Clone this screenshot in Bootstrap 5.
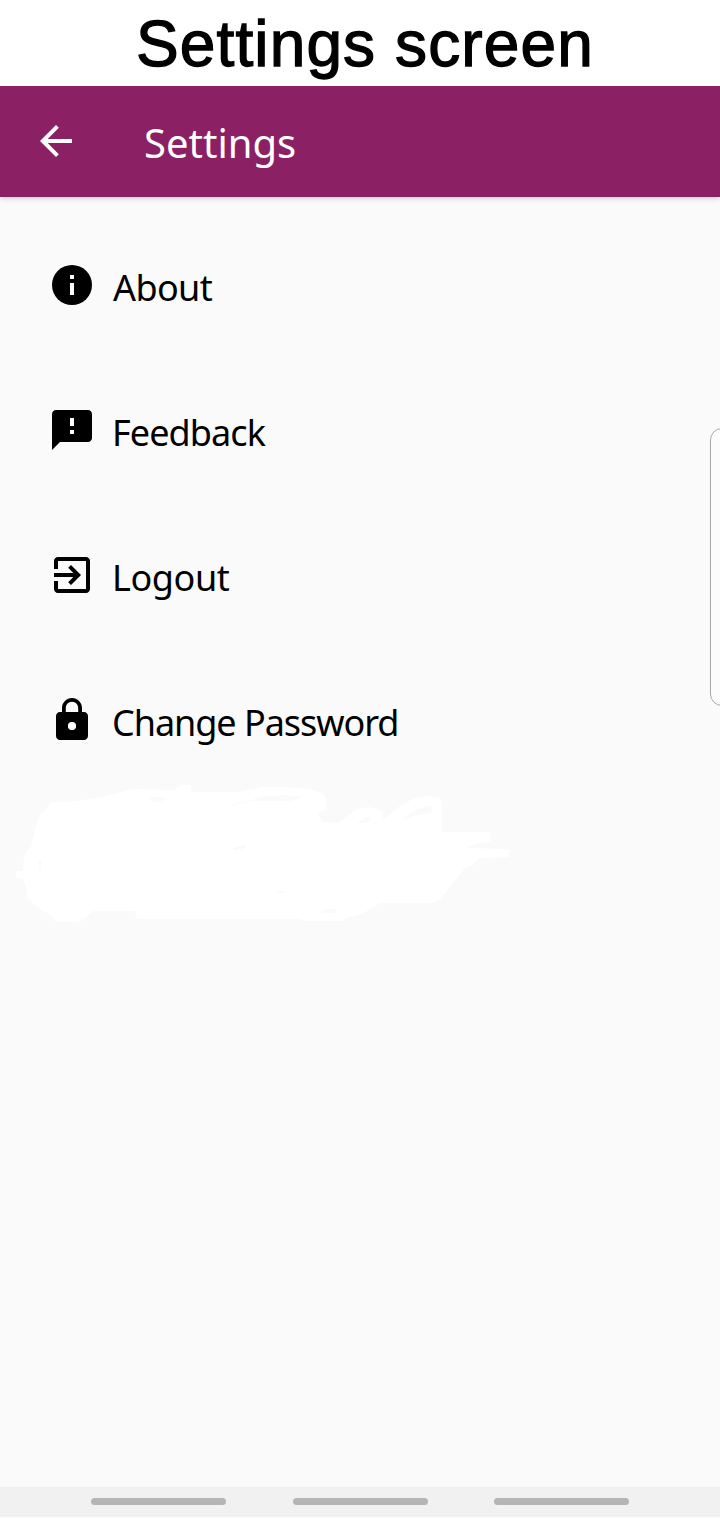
<!DOCTYPE html>
<html lang="en">
<head>
<meta charset="utf-8">
<meta name="viewport" content="width=device-width, initial-scale=1">
<title>Settings screen</title>
<link href="https://cdn.jsdelivr.net/npm/bootstrap@5.3.0/dist/css/bootstrap.min.css" rel="stylesheet">
<style>
body{font-family:"Noto Sans",sans-serif;color:#000;background:#fff}
.caption{height:86px;font:400 64px/86px "Liberation Sans",sans-serif;letter-spacing:1.12px;-webkit-text-stroke:1.3px #000;padding:1px 0 0 136px;white-space:nowrap}
.phone{height:1431px;background:#fafafa}
.appbar{height:111px;background:#8b2164;box-shadow:0 1px 6px rgba(0,0,0,.2);padding:0 0 2px 32px;z-index:1}
.appbar h1{font-size:40px;line-height:54px;font-weight:400;margin:4px 0 0 64px}
.entries{padding:64px 48px 0;gap:97px}
.entry{height:48px;font-size:36px;line-height:48px;color:#000;gap:17px;white-space:nowrap}
.entry svg{flex:none}
.entry span{padding-top:3px;line-height:48px}
.t1{letter-spacing:-.6px}
.t2{letter-spacing:-.9px;margin-left:-1px}
.t3{letter-spacing:-.4px;margin-left:-1px}
.t4{letter-spacing:-1.05px;margin-left:-1px}
.scribble{margin-top:26px;display:block}
.edge{position:absolute;left:710px;top:428px;width:24px;height:278px;border:1px solid #a8a8a8;border-radius:13px;background:#fcfcfc}
.navstrip{height:30px;background:#f1f1f1;padding:0 91px 1px}
.navstrip i{width:135px;height:7px;border-radius:4px;background:#b5b5b5}
</style>
</head>
<body class="overflow-hidden position-relative">
<div class="caption">Settings screen</div>
<main class="phone d-flex flex-column overflow-hidden">
  <header class="appbar d-flex align-items-center text-white position-relative flex-shrink-0">
    <svg width="48" height="48" viewBox="0 0 24 24" fill="#fff"><path d="M20 11H7.83l5.59-5.59L12 4l-8 8 8 8 1.41-1.41L7.83 13H20z"/></svg>
    <h1>Settings</h1>
  </header>
  <nav class="entries d-flex flex-column">
    <a class="entry d-flex text-decoration-none">
      <svg width="48" height="48" viewBox="0 0 24 24"><circle cx="12" cy="12" r="10"/><path fill="#fff" d="M11 7h2v2h-2zM11 11h2v6h-2z"/></svg><span class="t1">About</span></a>
    <a class="entry d-flex text-decoration-none">
      <svg width="48" height="48" viewBox="0 0 24 24"><path d="M20 2H4c-1.100 0-1.990.9-1.990 2L2 22l4-4h14c1.100 0 2-.9 2-2V4c0-1.100-.9-2-2-2z"/><path fill="#fff" d="M11 6h2v4h-2zM11 12h2v2h-2z"/></svg><span class="t2">Feedback</span></a>
    <a class="entry d-flex text-decoration-none">
      <svg width="48" height="48" viewBox="0 0 24 24"><path d="M10.090 15.590L11.500 17l5-5-5-5-1.410 1.410L12.670 11H3v2h9.670l-2.580 2.590zM19 3H5c-1.110 0-2 .9-2 2v4h2V5h14v14H5v-4H3v4c0 1.100.89 2 2 2h14c1.100 0 2-.9 2-2V5c0-1.100-.9-2-2-2z"/></svg><span class="t3">Logout</span></a>
    <a class="entry d-flex text-decoration-none">
      <svg width="48" height="48" viewBox="0 0 24 24"><path d="M18 8h-1V6c0-2.760-2.240-5-5-5S7 3.240 7 6v2H6c-1.100 0-2 .9-2 2v10c0 1.100.9 2 2 2h12c1.100 0 2-.9 2-2V10c0-1.100-.9-2-2-2zm-6 9c-1.100 0-2-.9-2-2s.9-2 2-2 2 .9 2 2-.9 2-2 2zm3.100-9H8.900V6c0-1.710 1.390-3.100 3.100-3.100s3.100 1.390 3.100 3.100v2z"/><circle cx="12" cy="15" r="2" fill="#fff"/></svg><span class="t4">Change Password</span></a>
  </nav>
  <svg class="scribble flex-shrink-0" width="540" height="170" viewBox="0 770 540 170">
    <path fill="#fff" d="M52 802L78 801 102 797 132 789 174 790 181 785H191V792H238L262 787 285 787 310 789 323 794 326 798V809L318 813 322 822 338 823 355 810 368 807 379 809 383 812V820L400 806 415 798 430 796 440 798 442 803V832H491V841L474 844 467 848 509 849V857L479 858 473 865 465 868 440 899 433 903H380L362 914 346 918 342 921H305L300 919H137L135 911H93L83 920 75 922H56L50 914 44 912 28 899 25 883 22 878H16V871H23V864L26 852 31 847 38 818z"/>
    <path fill="#fafafa" d="M357 823l7-5 7-1-3 6zM402 820l13-10 12-4 6 1-2 6-15 2zM260 797l25-2 19 2-14 4h-40zM149 797h14l3 3-12 2zM226 807l15-5 10-1zM233 848l11-3 2 3-11 2zM275 891h11l-5 3zM322 911l5-2h9v4h-14zM39 860h2v11h-2z"/>
  </svg>
  <footer class="navstrip d-flex align-items-center justify-content-between mt-auto flex-shrink-0"><i></i><i></i><i></i></footer>
</main>
<div class="edge"></div>
<script src="https://cdn.jsdelivr.net/npm/bootstrap@5.3.0/dist/js/bootstrap.bundle.min.js"></script>
</body>
</html>
